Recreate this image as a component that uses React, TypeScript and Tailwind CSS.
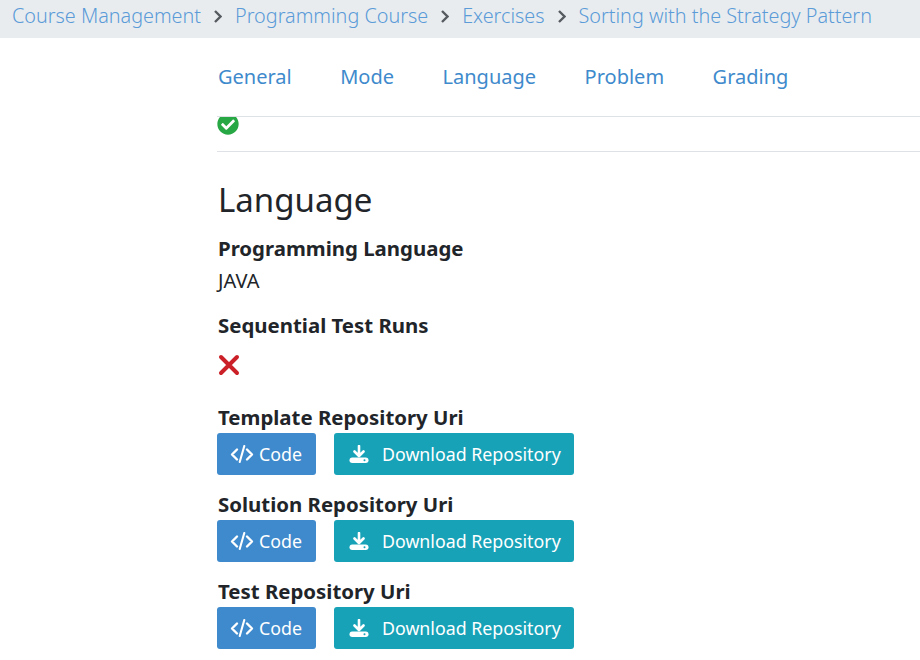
import React from 'react';
import {FaCheckCircle} from 'react-icons/fa';

const crumbs = ['Course Management', 'Programming Course', 'Exercises', 'Sorting with the Strategy Pattern'];
const tabs = ['General', 'Mode', 'Language', 'Problem', 'Grading'];
const repos = ['Template Repository Uri', 'Solution Repository Uri', 'Test Repository Uri'];

const CodeIcon = () => (
  <svg viewBox="0 0 24 18" className="h-[18px] w-6 shrink-0" fill="none" stroke="currentColor" strokeWidth="2.4" strokeLinecap="round" strokeLinejoin="round">
    <path d="M7 4.5L2 9.5l5 5M17 4.5l5 5-5 5"/>
    <path d="M14.3 1L9.7 17" strokeWidth="2.1"/>
  </svg>
);

const DownloadIcon = () => (
  <svg viewBox="0 0 20 18" className="h-[18px] w-5 shrink-0">
    <path d="M10 1v9.5M5.5 6.5l4.5 4.5 4.5-4.5" fill="none" stroke="currentColor" strokeWidth="2.6" strokeLinecap="round" strokeLinejoin="round"/>
    <rect x="0.5" y="12.5" width="19" height="5.5" rx="2.75" fill="currentColor"/>
    <circle cx="15.5" cy="15.2" r="1" fill="#17a2b8"/>
  </svg>
);

const RepoButtons = () => (
  <div className="flex gap-[18px] text-[17.8px] text-white">
    <div className="flex h-[42px] w-[99px] items-center gap-[5px] rounded-[3px] bg-[#3e8acc] pl-[13px]">
      <CodeIcon/>
      <span>Code</span>
    </div>
    <div className="flex h-[42px] w-[240px] items-center gap-[13px] rounded-[3px] bg-[#17a2b8] pl-[15px]">
      <DownloadIcon/>
      <span>Download Repository</span>
    </div>
  </div>
);

export default function App() {
  return (
    <div className="h-[660px] w-[920px] overflow-hidden whitespace-nowrap bg-white text-[20px] text-[#212529] font-['Noto_Sans',sans-serif]">
      <div className="flex h-[38px] items-center bg-[#e9ecef] px-3 pb-[6px] text-[19.8px] font-light text-[#5a9bd8]">
        {crumbs.map((c, i) => (
          <React.Fragment key={c}>
            {i > 0 ? (
              <svg viewBox="0 0 8 13" className="mx-[13px] h-[13px] w-2 shrink-0 text-[#555b60]" fill="none" stroke="currentColor" strokeWidth="2.4">
                <path d="M1 1l5.5 5.5L1 12"/>
              </svg>
            ) : null}
            <span>{c}</span>
          </React.Fragment>
        ))}
      </div>
      <div className="ml-[217px]">
        <div className="flex h-[79px] items-center gap-[48.5px] border-b border-[#dee2e6] pl-px text-[#3e8acc]">
          {tabs.map(t => <span key={t}>{t}</span>)}
        </div>
        <div className="h-[35px] overflow-hidden border-b border-[#dee2e6]">
          <FaCheckCircle className="-mt-1 text-[22px] text-[#28a745]"/>
        </div>
        <h2 className="mt-[24px] pl-px text-[33px] leading-[48px]">Language</h2>
        <div className="mt-[9px] pl-px text-[20.4px] font-bold leading-[30px]">Programming Language</div>
        <div className="mt-[3px] pl-px leading-[30px]">JAVA</div>
        <div className="mt-[14px] pl-px text-[20.4px] font-bold leading-[30px]">Sequential Test Runs</div>
        <div className="mt-[12px] h-[50px] pt-[2px] pl-px">
          <svg viewBox="0 0 22 22" className="h-[22px] w-[22px]" fill="none" stroke="#cb2027" strokeWidth="4" strokeLinecap="round">
            <path d="M3 3l16 16M19 3L3 19"/>
          </svg>
        </div>
        {repos.map(r => (
          <div key={r} className="mb-[14px]">
            <div className="mb-px pl-px text-[20.4px] font-bold leading-[30px]">{r}</div>
            <RepoButtons/>
          </div>
        ))}
      </div>
    </div>
  );
}
